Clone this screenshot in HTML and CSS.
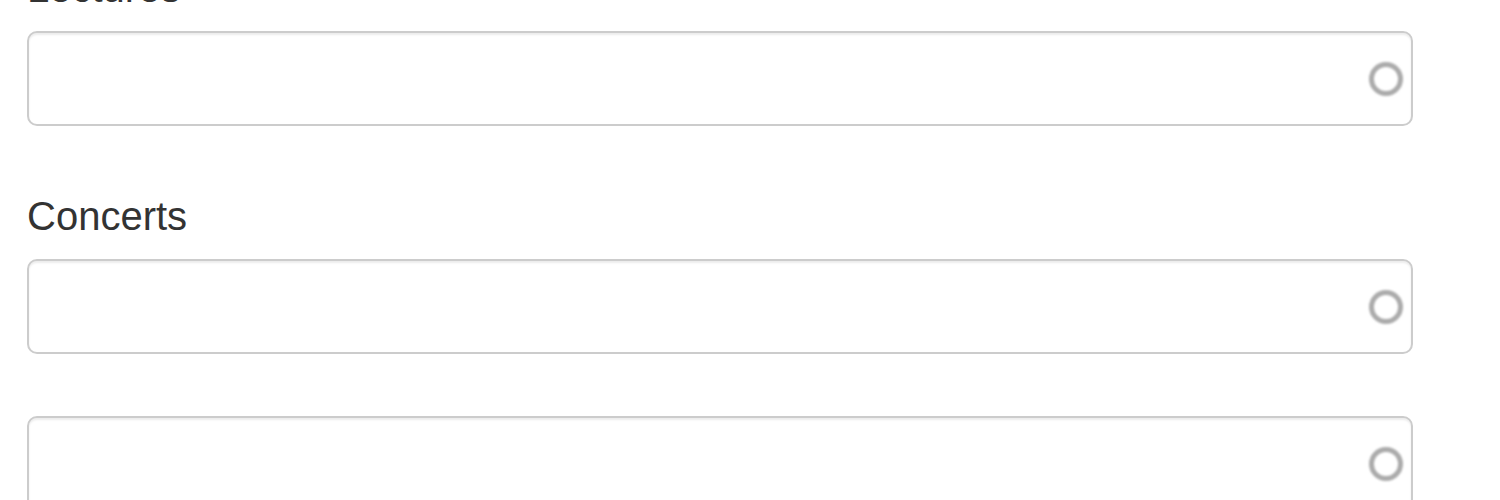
FILE: index.html
```html
<!DOCTYPE html>
<html>
<head>
<meta charset="utf-8">
<link rel="stylesheet" href="styles.css">
</head>
<body>
<form class="form">
  <div class="group">
    <label class="label">Lectures</label>
    <div class="field">
      <input class="input" type="text">
      <span class="ring"></span>
    </div>
  </div>
  <div class="group">
    <label class="label">Concerts</label>
    <div class="field">
      <input class="input" type="text">
      <span class="ring"></span>
    </div>
  </div>
  <div class="group">
    <div class="field">
      <input class="input" type="text">
      <span class="ring"></span>
    </div>
  </div>
</form>
</body>
</html>
```
FILE: styles.css
```css
html, body {
  margin: 0;
  padding: 0;
  background: #ffffff;
}
body {
  font-family: "Liberation Sans", Arial, sans-serif;
  color: #333333;
}
.form {
  margin-top: -40px;
  padding-left: 27px;
  width: 1386px;
}
.group {
  margin-bottom: 62px;
}
.label {
  display: block;
  font-size: 40px;
  line-height: 57px;
  margin-bottom: 14px;
  color: #333333;
}
.field {
  position: relative;
}
.input {
  display: block;
  box-sizing: border-box;
  width: 100%;
  height: 95px;
  margin: 0;
  padding: 0 24px;
  border: 2px solid #cccccc;
  border-radius: 10px;
  background: #ffffff;
  box-shadow: inset 0 2px 2px rgba(0, 0, 0, 0.075);
  font-family: inherit;
  font-size: 28px;
  outline: none;
}
.ring {
  position: absolute;
  right: 10px;
  top: 31px;
  width: 24px;
  height: 24px;
  border: 5px solid #ababab;
  border-radius: 50%;
  filter: blur(0.8px);
}
```
